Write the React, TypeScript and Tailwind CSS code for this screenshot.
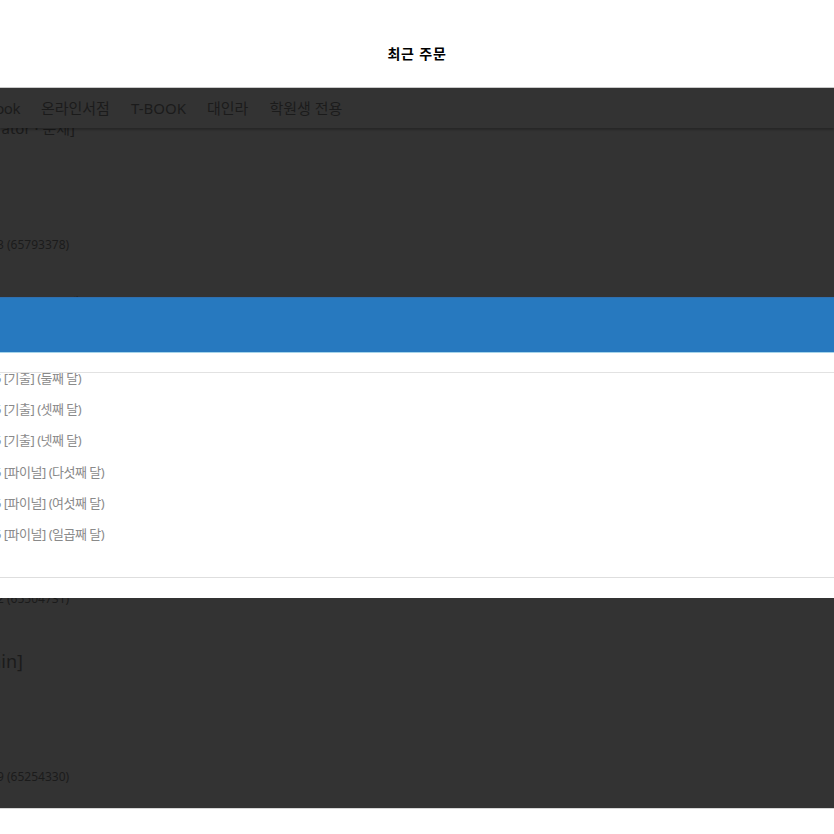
import React from "react";

const font = { fontFamily: '"Noto Sans", "Noto Sans CJK KR", sans-serif' };

const navItems = ["온라인서점", "T-BOOK", "대인라", "학원생 전용"];

const months = [
  "5 [기출] (둘째 달)",
  "5 [기출] (셋째 달)",
  "5 [기출] (넷째 달)",
  "5 [파이널] (다섯째 달)",
  "5 [파이널] (여섯째 달)",
  "5 [파이널] (일곱째 달)",
];

const App = () => {
  return (
    <div
      className="w-[834px] h-[834px] overflow-hidden bg-white flex flex-col"
      style={font}
    >
      {/* header */}
      <div className="h-[87px] shrink-0 flex items-start justify-center pt-[43px]">
        <h1 className="text-[14px] font-bold text-black tracking-[0.8px]">최근 주문</h1>
      </div>

      {/* dimmed page behind */}
      <div className="h-[210px] shrink-0 bg-[#333333] border-t border-[#c9c9c9] flex flex-col overflow-hidden text-[#1b1b1b]">
        <nav className="h-[40px] shrink-0 flex items-center gap-[21px] text-[15px] overflow-hidden shadow-[0_2px_2px_rgba(0,0,0,0.25)] relative">
          <span className="-ml-[14px] tracking-[-0.5px]">Book</span>
          {navItems.map((item) => (
            <span key={item}>{item}</span>
          ))}
        </nav>
        <div className="h-[11px] shrink-0 overflow-hidden">
          <p className="-mt-[11px] -ml-[44px] text-[15px] whitespace-nowrap">[Illustrator · 문제]</p>
        </div>
        <p className="mt-[98px] -ml-[3px] text-[12px] leading-[16px]">3 (65793378)</p>
        <div className="mt-auto h-[3px] overflow-hidden">
          <p className="ml-[55px] text-[13px] leading-[16px]">문제</p>
        </div>
      </div>

      {/* selected bar */}
      <div className="h-[56px] shrink-0 bg-[#2779bf] border-t border-[#2f6fb0] border-b border-b-[#a6d4ea]" />

      {/* option list */}
      <div className="h-[20px] shrink-0 bg-white border-b border-[#e2e2e2]" />
      <ul className="h-[204px] shrink-0 overflow-hidden bg-white text-[13px] tracking-[-0.5px] text-[#8a8a8a]">
        <div className="-mt-[10px]">
          {months.map((m) => (
            <li key={m} className="h-[31.25px] flex items-center">
              <span className="-ml-[6px] whitespace-nowrap">{m}</span>
            </li>
          ))}
        </div>
      </ul>
      <div className="h-[21px] shrink-0 bg-white border-t border-[#dedede]" />

      {/* dimmed page behind, lower part */}
      <div className="h-[210px] shrink-0 bg-[#333333] flex flex-col overflow-hidden text-[#1b1b1b]">
        <div className="h-[9px] shrink-0 overflow-hidden">
          <p className="-mt-[7px] -ml-[3px] text-[12px] leading-[16px]">2 (65504731)</p>
        </div>
        <p className="mt-[43px] -ml-[44px] text-[18px] leading-[22px]">[Admin]</p>
        <p className="mt-[97px] -ml-[3px] text-[12px] leading-[16px]">9 (65254330)</p>
      </div>
      <div className="flex-1 bg-white border-t border-[#d6d6d6]" />
    </div>
  );
};

export default App;
